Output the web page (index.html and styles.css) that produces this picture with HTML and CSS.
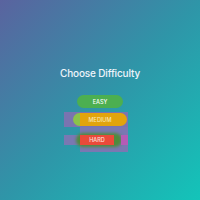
FILE: index.html
```html
<!DOCTYPE html>
<html lang="en">
<head>
  <meta charset="UTF-8">
  <title>Choose Difficulty</title>
  <link rel="stylesheet" href="styles.css">
</head>
<body>
  <main class="screen">
    <h1 class="title">Choose Difficulty</h1>
    <div class="levels">
      <div class="level level-easy">
        <button class="pill pill-easy">EASY</button>
      </div>
      <div class="level level-medium">
        <span class="ghost ghost-lime"></span>
        <button class="pill pill-medium">MEDIUM</button>
      </div>
      <div class="level level-hard">
        <span class="block block-tall"></span>
        <span class="block block-band"></span>
        <span class="ghost ghost-green"></span>
        <span class="block block-edge"></span>
        <button class="pill pill-hard">HARD</button>
      </div>
    </div>
  </main>
</body>
</html>
```

FILE: styles.css
```css
html, body {
  margin: 0;
  height: 100%;
}
body {
  font-family: "Inter", "Open Sans", sans-serif;
  background: linear-gradient(135deg, #5a639f 0%, #2f95a8 50%, #13c4b9 100%);
  color: #fff;
}
.screen {
  height: 200px;
  padding-top: 66px;
  box-sizing: border-box;
}
.title {
  margin: 0;
  font-size: 10px;
  line-height: 14px;
  font-weight: 500;
  text-align: center;
  letter-spacing: -0.15px;
  color: #eef4fb;
}
.levels {
  display: flex;
  flex-direction: column;
  align-items: flex-start;
  padding-left: 64px;
  margin-top: 15px;
}
.level {
  position: relative;
  width: 64px;
}
.pill {
  border: none;
  padding: 0;
  font-family: inherit;
  font-size: 5.5px;
  font-weight: 500;
  color: #fff;
  display: flex;
  align-items: center;
  justify-content: center;
  cursor: pointer;
}
.level-easy {
  height: 13px;
}
.pill-easy {
  margin-left: 13px;
  width: 46px;
  height: 13px;
  border-radius: 7px;
  background: #4caf50;
}
.level-medium {
  height: 15px;
  margin-top: 4px;
  background: #7a74b0;
}
.ghost-lime {
  position: absolute;
  left: 9px;
  top: 1px;
  width: 30px;
  height: 13px;
  border-radius: 7px;
  background: #8bc34a;
}
.pill-medium {
  position: absolute;
  left: 16px;
  top: 1px;
  width: 47px;
  height: 13px;
  border-radius: 0 7px 7px 0;
  background: #e2a40d;
  color: #fbe7b0;
  padding-right: 7px;
  box-sizing: border-box;
}
.level-hard {
  height: 25px;
}
.block {
  position: absolute;
  background: #7a78b2;
}
.block-tall {
  left: 16px;
  top: 0;
  width: 48px;
  height: 25px;
}
.block-band {
  left: 0;
  top: 8px;
  width: 64px;
  height: 10px;
}
.block-edge {
  left: 57px;
  top: 8px;
  width: 7px;
  height: 10px;
  background: #b45cb6;
}
.ghost-green {
  position: absolute;
  left: 12px;
  top: 6px;
  width: 46px;
  height: 14px;
  border-radius: 7px;
  background: #4f8a3c;
  filter: blur(1.5px);
}
.pill-hard {
  position: absolute;
  left: 16px;
  top: 8px;
  width: 34px;
  height: 10px;
  background: #ea4a3a;
  color: #fde0dc;
}
```
